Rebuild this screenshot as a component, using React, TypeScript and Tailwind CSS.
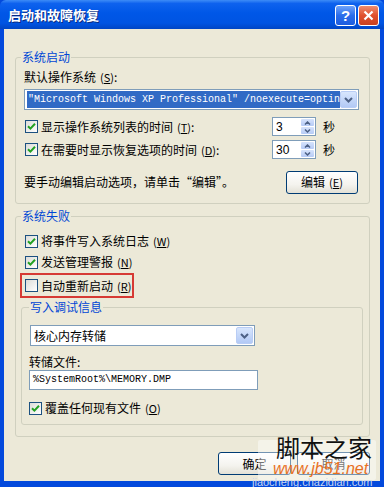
import React from "react";

const Check = ({ checked }: { checked: boolean }) => (
  <span className="w-[13px] h-[13px] border border-[#1C5180] bg-[linear-gradient(135deg,#dcdcd7,#ffffff)] flex items-center justify-center shrink-0">
    {checked && (
      <svg width="9" height="9" viewBox="0 0 9 9">
        <path d="M1 4.2 L3.4 6.6 L8 1.8" stroke="#21A121" strokeWidth="2" fill="none" />
      </svg>
    )}
  </span>
);

const Mn = ({ k }: { k: string }) => (
  <span className="ml-[4px] text-[11px]">
    (<span className="underline">{k}</span>)
  </span>
);

const DropBtn = () => (
  <span className="w-[17px] h-[17px] rounded-[2px] border border-[#B9CDF5] bg-[linear-gradient(180deg,#D8E6FD,#B2C9F5)] flex items-center justify-center shrink-0">
    <svg width="9" height="6" viewBox="0 0 9 6">
      <path d="M1 1 L4.5 4.5 L8 1" stroke="#4D6185" strokeWidth="2" fill="none" />
    </svg>
  </span>
);

const Spin = ({ v }: { v: string }) => (
  <div className="w-[44px] h-[19px] border border-[#7F9DB9] bg-white flex items-center justify-between pl-[3px] pr-[1px]">
    <span className="font-['Liberation_Sans',sans-serif] text-[12px]">{v}</span>
    <div className="flex flex-col gap-[1px]">
      {[0, 1].map((i) => (
        <span
          key={i}
          className="w-[13px] h-[7px] rounded-[1px] bg-[linear-gradient(180deg,#D6E3FC,#B6CBF6)] flex items-center justify-center"
        >
          <svg width="7" height="4" viewBox="0 0 7 4">
            <path
              d={i === 0 ? "M1 3.5 L3.5 1 L6 3.5" : "M1 0.5 L3.5 3 L6 0.5"}
              stroke="#4D6185"
              strokeWidth="1.5"
              fill="none"
            />
          </svg>
        </span>
      ))}
    </div>
  </div>
);

const XPButton = ({ children, w }: { children: React.ReactNode; w: string }) => (
  <div
    className={`${w} h-[23px] rounded-[3px] border border-[#003C74] bg-[linear-gradient(180deg,#ffffff,#F4F3EE_60%,#E3E1D6)] flex items-center justify-center`}
  >
    {children}
  </div>
);

export default function App() {
  return (
    <div className="relative w-[384px] h-[487px] flex flex-col bg-[#0349DC] font-['Noto_Sans_CJK_SC',sans-serif] text-[12px] leading-[14px] text-black overflow-hidden">
      {/* Title bar */}
      <div className="h-[29px] shrink-0 flex items-start bg-[linear-gradient(180deg,#3D8CF7_0%,#0E62EE_12%,#0057E7_45%,#0054E2_80%,#0045C4_100%)] rounded-t-[6px] pl-[8px] pr-[5px]">
        <span className="mt-[7px] text-white font-bold text-[13px] leading-[16px] [text-shadow:1px_1px_0_#0A2A80]">
          启动和故障恢复
        </span>
        <div className="ml-auto mt-[5px] flex gap-[2px]">
          <span className="w-[21px] h-[21px] rounded-[3px] border border-white bg-[linear-gradient(180deg,#6FA3FA,#2A6DEB_50%,#1C5CDF)] flex items-center justify-center text-white font-bold text-[15px] font-['Liberation_Sans',sans-serif]">
            ?
          </span>
          <span className="w-[21px] h-[21px] rounded-[3px] border border-white bg-[linear-gradient(180deg,#EE8D6E,#E0512F_50%,#C8401F)] flex items-center justify-center">
            <svg width="11" height="11" viewBox="0 0 11 11">
              <path d="M1.5 1.5 L9.5 9.5 M9.5 1.5 L1.5 9.5" stroke="white" strokeWidth="2.2" />
            </svg>
          </span>
        </div>
      </div>

      {/* Body */}
      <div className="flex-1 mx-[4px] mb-[6px] bg-[#ECE9D8] flex flex-col pt-[21px]">
        {/* Group 1 */}
        <fieldset className="ml-[11px] mr-[10px] border border-[#D0D0BF] rounded-[3px] pb-[10px]">
          <legend className="ml-[5px] px-[1px] text-[#0046D5] leading-[14px]">系统启动</legend>
          <div className="ml-[8px] mt-[6px] h-[14px]">
            默认操作系统<Mn k="S" />:
          </div>
          <div className="ml-[8px] mt-[5px] w-[335px] h-[21px] border border-[#7F9DB9] bg-white flex items-center pl-[2px] pr-[1px]">
            <div className="flex-1 h-[17px] bg-[#316AC5] text-white font-['Liberation_Mono',monospace] text-[10px] leading-[17px] overflow-hidden whitespace-nowrap pl-[1px]">
              "Microsoft Windows XP Professional" /noexecute=optin
            </div>
            <DropBtn />
          </div>
          <div className="mt-[7px] h-[19px] flex items-center">
            <div className="ml-[9px] w-[247px] flex items-center gap-[3px]">
              <Check checked />
              <span>
                显示操作系统列表的时间<Mn k="T" />:
              </span>
            </div>
            <Spin v="3" />
            <span className="ml-[7px]">秒</span>
          </div>
          <div className="mt-[4px] h-[19px] flex items-center">
            <div className="ml-[9px] w-[247px] flex items-center gap-[3px]">
              <Check checked />
              <span>
                在需要时显示恢复选项的时间<Mn k="D" />:
              </span>
            </div>
            <Spin v="30" />
            <span className="ml-[7px]">秒</span>
          </div>
          <div className="mt-[12px] h-[22px] flex items-center">
            <span className="ml-[8px]">要手动编辑启动选项，请单击“编辑”。</span>
            <div className="ml-auto mr-[11px]">
              <XPButton w="w-[72px]">
                编辑<Mn k="E" />
              </XPButton>
            </div>
          </div>
        </fieldset>

        {/* Group 2 */}
        <fieldset className="mt-[5px] ml-[11px] mr-[10px] border border-[#D0D0BF] rounded-[3px] pb-[11px]">
          <legend className="ml-[5px] px-[1px] text-[#0046D5] leading-[14px]">系统失败</legend>
          <div className="mt-[10px] ml-[9px] h-[16px] flex items-center gap-[3px]">
            <Check checked />
            <span>
              将事件写入系统日志<Mn k="W" />
            </span>
          </div>
          <div className="mt-[5px] ml-[9px] h-[16px] flex items-center gap-[3px]">
            <Check checked />
            <span>
              发送管理警报<Mn k="N" />
            </span>
          </div>
          <div className="mt-[3px] ml-[4px] w-[114px] h-[25px] border-2 border-[#D63A34] flex items-center gap-[3px] pl-[3px]">
            <Check checked={false} />
            <span>
              自动重新启动<Mn k="R" />
            </span>
          </div>

          {/* Inner group */}
          <fieldset className="mt-[2px] ml-[5px] mr-[6px] border border-[#D0D0BF] rounded-[3px] pb-[8px]">
            <legend className="ml-[7px] px-[1px] text-[#0046D5] leading-[14px]">写入调试信息</legend>
            <div className="mt-[11px] ml-[8px] w-[225px] h-[21px] border border-[#7F9DB9] bg-white flex items-center pl-[3px] pr-[1px]">
              <span className="flex-1">核心内存转储</span>
              <DropBtn />
            </div>
            <div className="mt-[9px] ml-[7px] h-[14px]">转储文件:</div>
            <div className="mt-[1px] ml-[7px] w-[229px] h-[20px] border border-[#7F9DB9] bg-white flex items-center pl-[3px] font-['Liberation_Mono',monospace] text-[10px]">
              %SystemRoot%\MEMORY.DMP
            </div>
            <div className="mt-[10px] ml-[7px] h-[16px] flex items-center gap-[3px]">
              <Check checked />
              <span>
                覆盖任何现有文件<Mn k="O" />
              </span>
            </div>
          </fieldset>
        </fieldset>

        {/* Buttons */}
        <div className="mt-[15px] mr-[10px] flex justify-end gap-[6px]">
          <XPButton w="w-[73px]">确定</XPButton>
          <XPButton w="w-[73px]">取消</XPButton>
        </div>
      </div>

      {/* Watermark overlay */}
      <div className="absolute left-[258px] top-[440px] w-[118px] h-[40px] bg-white/45 rounded-[2px]" />
      <span className="absolute left-[276px] top-[433px] text-[24px] leading-[28px] text-[#111]">脚本之家</span>
      <span className="absolute left-[273px] top-[460px] text-[16px] leading-[17px] text-[#E8701F] font-['Liberation_Sans',sans-serif] italic">
        www.jb51.net
      </span>
      <span className="absolute left-[252px] top-[477px] text-[11px] leading-[11px] text-[#C9D6F0] font-['Liberation_Sans',sans-serif]">
        jiaocheng.chazidian.com
      </span>
    </div>
  );
}
